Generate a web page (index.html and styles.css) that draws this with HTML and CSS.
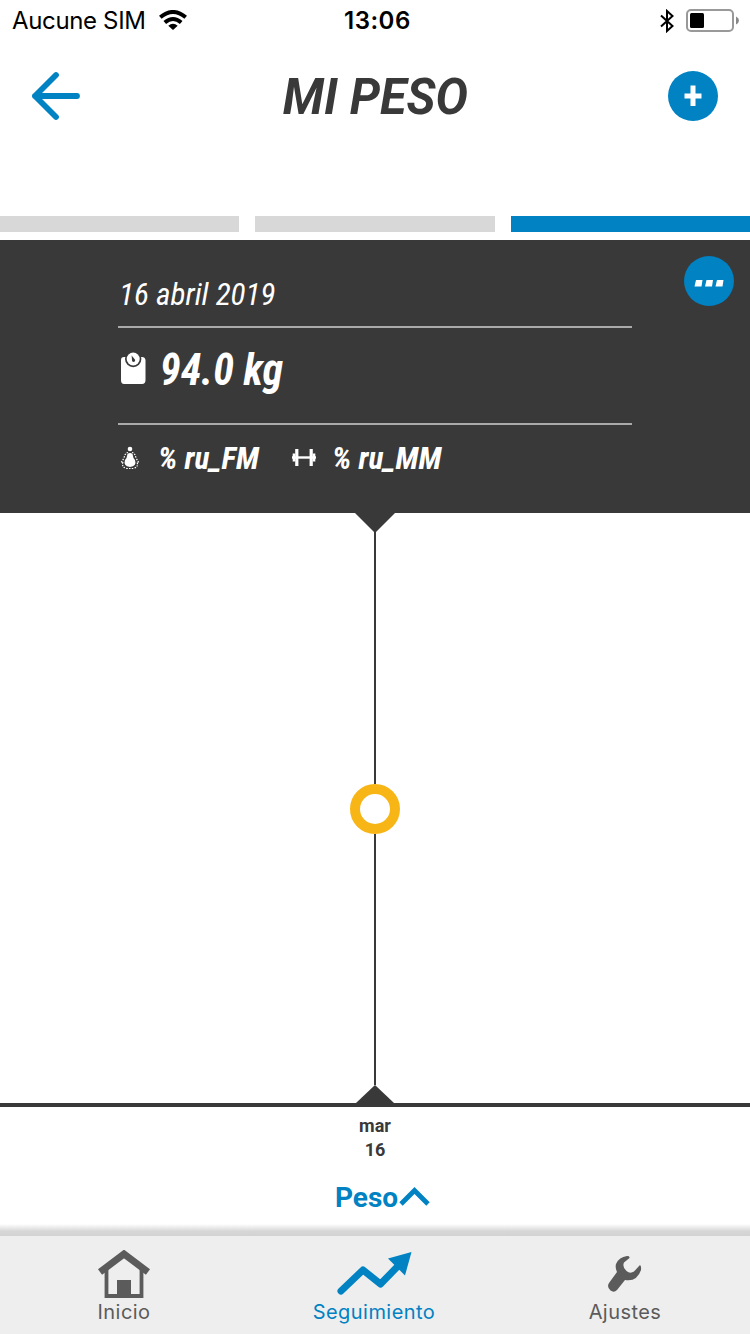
FILE: index.html
```html
<!DOCTYPE html>
<html lang="es">
<head>
    <meta charset="utf-8">
    <title>Mi peso</title>
    <link rel="stylesheet" href="styles.css">
</head>
<body>
    <div class="status">
        <span class="carrier">Aucune SIM</span>
        <svg class="wifi" width="28" height="20" viewBox="0 0 28 20">
            <g fill="none" stroke="#000" stroke-width="4">
                <path d="M1.3 7.2Q14 -3.2 26.7 7.2"/>
                <path d="M5.8 12.5Q14 5.5 22.2 12.5"/>
            </g>
            <path d="M9.3 15.7Q14 11.8 18.7 15.7L14 20Z"/>
        </svg>
        <span class="time">13:06</span>
        <svg class="bluetooth" width="14" height="24" viewBox="0 0 14 24">
            <path d="M1 6.5L12.5 17L7 22V2L12.5 7L1 17.5" fill="none" stroke="#000" stroke-width="2"/>
        </svg>
        <svg class="battery" width="53" height="24" viewBox="0 0 53 24">
            <rect x="1" y="1" width="46" height="21" rx="4" fill="none" stroke="#999" stroke-width="2"/>
            <rect x="4" y="4" width="14" height="15" rx="1.5"/>
            <path d="M50 7.5Q53 9 53 11.5Q53 14 50 15.5Z" fill="#888"/>
        </svg>
    </div>

    <header class="header">
        <svg class="back" width="50" height="50" viewBox="0 0 50 50">
            <path d="M26 4L5 25L26 46M5 25H47" fill="none" stroke="#0082c3" stroke-width="5.8" stroke-linecap="round" stroke-linejoin="round"/>
        </svg>
        <h1>MI PESO</h1>
        <button class="round add">
            <svg width="18" height="22" viewBox="0 0 18 22"><path d="M9 0.5V21M0.5 11H17.5" stroke="#fff" stroke-width="5"/></svg>
        </button>
    </header>

    <div class="tabs">
        <div class="tab"></div>
        <div class="tab"></div>
        <div class="tab active"></div>
    </div>

    <section class="card">
        <button class="round more">
            <svg width="30" height="8" viewBox="0 0 30 8"><path d="M2 1H8.5L7.5 7.5H0.5ZM12.5 1H19L18 7.5H11ZM23 1H29.5L28.5 7.5H21.5Z" fill="#fff"/></svg>
        </button>
        <div class="row date"><span class="narrow">16 abril 2019</span></div>
        <div class="row weight">
            <svg width="26" height="34" viewBox="0 0 26 34">
                <path d="M4 6H6A7.8 7.8 0 0 0 20 6H22Q25 6 25.5 9V29Q25.5 33 22 33H4Q1 33 1 29V9Q1 6 4 6Z" fill="#fff"/>
                <circle cx="13.2" cy="8" r="8.2" fill="#393939"/>
                <circle cx="13.2" cy="8" r="6.5" fill="#fff"/>
                <path d="M11.6 4.5L14.5 8A1.6 1.6 0 1 1 12 9Z" fill="#393939"/>
            </svg>
            <span class="narrow">94.0 kg</span>
        </div>
        <div class="details">
            <svg width="20" height="24" viewBox="0 0 20 24">
                <circle cx="10" cy="3" r="2.3" fill="#fff"/>
                <path d="M7.5 8Q10 6 12.5 8Q13 12 15 14Q17 20 10 21Q3 20 5 14Q7 12 7.5 8Z" fill="#fff"/>
                <path d="M8 6.5Q5 7 4 12L1 17M12 6.5Q15 7 16 12L19 17M3 16Q1 21 7 22.5H13Q19 21 17 16" fill="none" stroke="#fff" stroke-width="1.2" stroke-dasharray="1.5 1.2"/>
            </svg>
            <span class="narrow fat">% ru_FM</span>
            <svg width="24" height="18" viewBox="0 0 24 18">
                <path d="M0 8.5H24" stroke="#fff" stroke-width="2.4"/>
                <path d="M4.8 0V17M19.2 0V17" stroke="#fff" stroke-width="3.2"/>
                <path d="M2 4.5V12.5M22 4.5V12.5" stroke="#fff" stroke-width="2.6"/>
            </svg>
            <span class="narrow muscle">% ru_MM</span>
        </div>
    </section>

    <section class="chart">
        <div class="arrow-down"></div>
        <div class="line"></div>
        <div class="point"></div>
        <div class="line low"></div>
        <div class="arrow-up"></div>
    </section>

    <div class="axis">
        <div>mar</div>
        <div>16</div>
    </div>
    <div class="filter">
        <span>Peso</span>
        <svg width="32" height="22" viewBox="0 0 32 22"><path d="M3 19L16.5 5.5L30 19" fill="none" stroke="#0082c3" stroke-width="4.8"/></svg>
    </div>

    <nav class="nav">
        <a class="item">
            <svg width="52" height="48" viewBox="0 0 52 48">
                <path d="M2 22L26 4L50 22" fill="none" stroke="#5b5b5b" stroke-width="7"/>
                <path d="M8.5 18V46H43.5V18" fill="none" stroke="#5b5b5b" stroke-width="3.8"/>
                <path d="M19 30H33V47H19Z" fill="#5b5b5b"/>
            </svg>
            <span>Inicio</span>
        </a>
        <a class="item selected">
            <svg width="76" height="48" viewBox="0 0 76 48">
                <path d="M5 41L27 20L44.5 34L63 15" fill="none" stroke="#0082c3" stroke-width="7" stroke-linecap="round" stroke-linejoin="round"/>
                <path d="M52 8.5L75.5 2L69 25.5Z" fill="#0082c3"/>
            </svg>
            <span>Seguimiento</span>
        </a>
        <a class="item">
            <svg width="36" height="48" viewBox="0 0 36 48">
                <path d="M20 6Q12 7 9 14Q8 18 10 22L2 33Q-0.5 37 3.5 40.5Q7 43 10 40L18 30Q30 32 34 20Q34.5 16 33 15L27 21.5Q23 24 19.5 21Q15 17 17 12.5L22.5 8Q23 6 20 6Z" fill="#5b5b5b"/>
            </svg>
            <span>Ajustes</span>
        </a>
    </nav>
</body>
</html>
```

FILE: styles.css
```css
* { box-sizing: border-box; }
body { margin: 0; width: 750px; height: 1334px; overflow: hidden; background: #fff; color: #393939; font-family: Roboto, "Liberation Sans", sans-serif; display: flex; flex-direction: column; }
body > * { flex-shrink: 0; }
svg { display: block; flex: none; }
button { border: none; padding: 0; }
.narrow { font-stretch: 75%; font-style: italic; white-space: nowrap; transform: scaleX(0.975); transform-origin: left; }

.status { height: 40px; display: flex; align-items: center; padding: 2px 11px 0 12px; color: #000; font-family: Inter, sans-serif; font-size: 24px; }
.carrier { width: 147px; margin-top: -2px; letter-spacing: -0.35px; }
.wifi { margin-top: -2px; }
.time { margin: -2px 0 0 157px; font-weight: 600; width: 70px; letter-spacing: 0.5px; }
.bluetooth { margin-left: auto; margin-right: 12px; }

.header { height: 176px; padding: 30px 32px 0 30px; display: flex; align-items: flex-start; justify-content: space-between; }
.back { margin-top: 1px; }
.header h1 { margin: 0 0 0 3px; font-size: 50px; line-height: 54px; font-weight: bold; font-style: italic; transform: scaleX(0.97); }
.round { width: 50px; height: 50px; border-radius: 50%; background: #0082c3; display: flex; align-items: center; justify-content: center; }
.add { margin-top: 1px; }

.tabs { display: grid; grid-template-columns: repeat(3, 1fr); gap: 16px; height: 24px; }
.tab { height: 16px; background: #d8d8d8; }
.tab.active { background: #0082c3; }

.card { position: relative; height: 273px; padding: 22px 118px 0; background: #393939; color: #fff; }
.more { position: absolute; top: 16px; right: 16px; padding-top: 3px; }
.row { display: flex; align-items: center; border-bottom: 2px solid #aaa; }
.date { height: 66px; padding-left: 1px; font-size: 32px; }
.weight { height: 97px; padding: 0 0 15px 2px; font-size: 45px; font-weight: bold; gap: 14px; }
.weight .narrow { margin-top: 2px; transform: scaleX(0.935); }
.details { display: flex; align-items: center; height: 66px; padding-left: 2px; font-size: 32px; font-weight: bold; }
.fat { margin-left: 18px; width: 134px; }
.muscle { margin-left: 16px; }

.chart { height: 594px; display: flex; flex-direction: column; align-items: center; border-bottom: 4px solid #393939; }
.arrow-down { border: 20px solid transparent; border-top-color: #393939; border-bottom: none; margin-bottom: -1px; }
.arrow-up { border: 19px solid transparent; border-bottom: 18px solid #393939; border-top: none; }
.line { width: 2px; height: 252px; background: #393939; }
.low { flex: 1; }
.point { width: 50px; height: 50px; border: 10px solid #f8b616; border-radius: 50%; }

.axis { padding-top: 7px; text-align: center; font-size: 18px; line-height: 24px; font-weight: bold; }
.filter { height: 62px; padding: 20px 0 0 15px; display: flex; justify-content: center; color: #0082c3; font-size: 28px; line-height: 32px; font-weight: bold; }
.filter svg { margin-top: 3px; }

.nav { margin-top: auto; height: 110px; padding-top: 12px; background: linear-gradient(#fff, #d6d6d6 60%, #d3d3d3) top / 100% 12px no-repeat, #eee; display: grid; grid-template-columns: 248px 252px 250px; font-family: Inter, sans-serif; font-size: 20px; letter-spacing: 0.45px; color: #5b5b5b; }
.item { display: flex; flex-direction: column; align-items: center; padding-top: 14px; line-height: 28px; }
.selected { color: #0082c3; }
```
